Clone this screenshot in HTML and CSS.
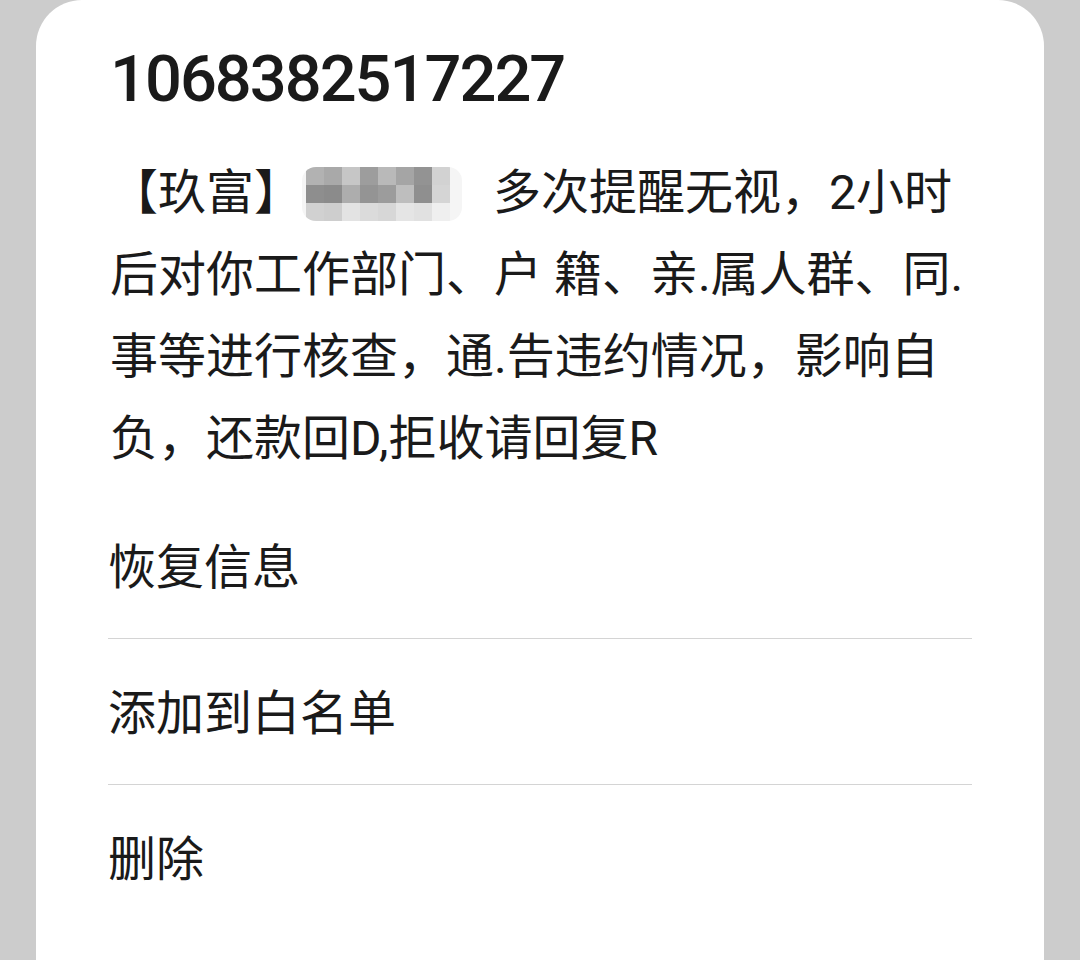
FILE: index.html
```html
<!DOCTYPE html>
<html lang="zh-CN">
<head>
    <meta charset="UTF-8">
    <meta name="viewport" content="width=device-width, initial-scale=1.0">
    <title>短信</title>
    <link rel="stylesheet" href="styles.css">
</head>
<body>

<div class="sheet">
    <div class="sender">1068382517227</div>

    <p class="message">【玖富】<span class="masked"><span class="pixels">
        <span style="background:#b2b2b2"></span><span style="background:#a9a9a9"></span><span style="background:#c6c6c6"></span><span style="background:#9d9d9d"></span><span style="background:#b9b9b9"></span><span style="background:#a5a5a5"></span><span style="background:#939393"></span><span style="background:#d2d2d2"></span>
        <span style="background:#8e8e8e"></span><span style="background:#8b8b8b"></span><span style="background:#adadad"></span><span style="background:#949494"></span><span style="background:#9c9c9c"></span><span style="background:#bebebe"></span><span style="background:#8f8f8f"></span><span style="background:#d5d5d5"></span>
        <span style="background:#d1d1d1"></span><span style="background:#cecece"></span><span style="background:#e3e3e3"></span><span style="background:#dbdbdb"></span><span style="background:#d7d7d7"></span><span style="background:#e5e5e5"></span><span style="background:#e1e1e1"></span><span style="background:#efefef"></span>
    </span></span>多次提醒无视，2小时后对你工作部门、户 籍、亲.属人群、同.事等进行核查，通.告违约情况，影响自负，还款回D,拒收请回复R</p>

    <ul class="actions">
        <li>恢复信息</li>
        <li>添加到白名单</li>
        <li>删除</li>
    </ul>
</div>

</body>
</html>
```

FILE: styles.css
```css
body {
    margin: 0;
    background-color: #cccccc;
    font-family: Roboto, "Noto Sans CJK SC", sans-serif;
    color: #1a1a1a;
}
.sheet {
    margin: 0 36px;
    min-height: 960px;
    background-color: white;
    border-radius: 46px 46px 0 0;
    padding: 39px 72px 0 74px;
    box-sizing: border-box;
}
.sender {
    font-size: 65px;
    font-weight: 500;
    letter-spacing: -2px;
    line-height: 80px;
}
.message {
    margin: 33px 0 0 0;
    font-size: 48px;
    line-height: 82px;
}
.masked {
    display: inline-block;
    overflow: hidden;
    height: 54px;
    padding: 0 12px 0 4px;
    margin-right: 31px;
    vertical-align: -12px;
    border-radius: 14px;
    background-color: #f5f5f5;
}
.pixels {
    display: grid;
    grid-template-columns: repeat(8, 18px);
    grid-auto-rows: 18px;
}
.actions {
    list-style: none;
    margin: 13px 0 0 -2px;
    padding: 0;
}
.actions li {
    font-size: 48px;
    line-height: 140px;
    padding-top: 5px;
    border-bottom: 1px solid #d4d4d4;
}
.actions li:last-child {
    border-bottom: none;
}
```
